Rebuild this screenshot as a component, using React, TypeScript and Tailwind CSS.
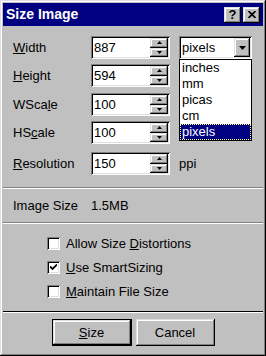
import React from "react";

const raised =
  "shadow-[inset_-1px_-1px_#000,inset_1px_1px_#dfdfdf,inset_-2px_-2px_#808080,inset_2px_2px_#fff]";

const sunken =
  "shadow-[inset_1px_1px_#808080,inset_-1px_-1px_#fff,inset_2px_2px_#000,inset_-2px_-2px_#dfdfdf]";

function SpinArrow({ down }: { down?: boolean }) {
  return (
    <svg width="5" height="3" viewBox="0 0 5 3">
      {down ? (
        <polygon points="0,0 5,0 2.5,3" fill="#000" />
      ) : (
        <polygon points="2.5,0 5,3 0,3" fill="#000" />
      )}
    </svg>
  );
}

function SpinField({ value }: { value: string }) {
  return (
    <div className={`flex h-[23px] w-[79px] bg-white p-[2px] ${sunken}`}>
      <div className="flex flex-1 items-center pl-[1px] text-[13px] leading-none">
        {value}
      </div>
      <div className="flex w-[18px] flex-col">
        <div className={`flex flex-1 items-center justify-center bg-[#c0c0c0] ${raised}`}>
          <SpinArrow />
        </div>
        <div className={`flex flex-1 items-center justify-center bg-[#c0c0c0] ${raised}`}>
          <SpinArrow down />
        </div>
      </div>
    </div>
  );
}

function Row({
  label,
  value,
  className,
  children,
}: {
  label: React.ReactNode;
  value: string;
  className: string;
  children?: React.ReactNode;
}) {
  return (
    <div className={`flex items-center ${className}`}>
      <div className="w-[78px] text-[13px]">{label}</div>
      <SpinField value={value} />
      {children}
    </div>
  );
}

function Checkbox({
  checked,
  children,
}: {
  checked?: boolean;
  children: React.ReactNode;
}) {
  return (
    <div className="flex h-[13px] items-center">
      <div
        className={`flex h-[13px] w-[13px] items-center justify-center bg-white ${sunken}`}
      >
        {checked && (
          <svg width="7" height="7" viewBox="0 0 7 7">
            <path
              d="M0 2.5 L2.5 5 L7 0.5"
              stroke="#000"
              strokeWidth="1.8"
              fill="none"
            />
          </svg>
        )}
      </div>
      <span className="ml-[6px] text-[13px]">{children}</span>
    </div>
  );
}

function Separator({ dark, className }: { dark?: boolean; className: string }) {
  return (
    <div className={className}>
      <div className={dark ? "h-px bg-[#000]" : "h-px bg-[#808080]"} />
      <div className="h-px bg-white" />
    </div>
  );
}

export default function App() {
  return (
    <div
      className={`flex h-[356px] w-[266px] flex-col bg-[#c0c0c0] p-[3px] font-['Liberation_Sans',Arial,sans-serif] text-black ${raised}`}
    >
      {/* title bar */}
      <div className="flex h-[23px] items-center justify-between bg-[#000080] pl-[3px] pr-[3px]">
        <span className="text-[14px] font-bold text-white">Size Image</span>

        <div className="flex gap-[2px]">
          <div
            className={`flex h-[16px] w-[17px] items-center justify-center bg-[#c0c0c0] text-[13px] font-bold leading-none ${raised}`}
          >
            ?
          </div>
          <div
            className={`flex h-[16px] w-[17px] items-center justify-center bg-[#c0c0c0] ${raised}`}
          >
            <svg width="8" height="7" viewBox="0 0 8 7">
              <path d="M0.5 0 L7.5 7 M7.5 0 L0.5 7" stroke="#000" strokeWidth="1.7" />
            </svg>
          </div>
        </div>
      </div>

      <div className="flex flex-col pl-[10px]">
        <Row
          className="mt-[10px]"
          value="887"
          label={
            <>
              <u>W</u>idth
            </>
          }
        >
          <div className="relative ml-[9px]">
            <div className={`flex h-[23px] w-[73px] bg-white p-[2px] ${sunken}`}>
              <div className="flex flex-1 items-center pl-px text-[13px]">pixels</div>
              <div
                className={`flex w-[16px] items-center justify-center bg-[#c0c0c0] ${raised}`}
              >
                <svg width="7" height="4" viewBox="0 0 7 4">
                  <polygon points="0,0 7,0 3.5,4" fill="#000" />
                </svg>
              </div>
            </div>

            <div className="absolute left-0 top-full z-10 flex w-[73px] flex-col border border-black bg-white text-[13px]">
              <div className="h-[16px] pl-[2px] leading-[16px]">inches</div>
              <div className="h-[16px] pl-[2px] leading-[16px]">mm</div>
              <div className="h-[16px] pl-[2px] leading-[16px]">picas</div>
              <div className="h-[16px] pl-[2px] leading-[16px]">cm</div>
              <div className="h-[16px] bg-[#000080] pl-[2px] leading-[16px] text-white outline-1 -outline-offset-1 outline-dotted outline-[#ffff80]">
                pixels
              </div>
            </div>
          </div>
        </Row>

        <Row
          className="mt-[5px]"
          value="594"
          label={
            <>
              <u>H</u>eight
            </>
          }
        />

        <Row
          className="mt-[6px]"
          value="100"
          label={
            <>
              WSca<u>l</u>e
            </>
          }
        />

        <Row
          className="mt-[5px]"
          value="100"
          label={
            <>
              HS<u>c</u>ale
            </>
          }
        />

        <Row
          className="mt-[8px]"
          value="150"
          label={
            <>
              <u>R</u>esolution
            </>
          }
        >
          <span className="ml-[9px] text-[13px]">ppi</span>
        </Row>
      </div>

      <Separator className="mt-[12px]" />

      <div className="flex h-[33px] items-center pl-[10px] text-[13px]">
        <span className="w-[78px]">Image Size</span>
        <span>1.5MB</span>
      </div>

      <Separator className="" />

      <div className="mt-[13px] flex flex-col gap-[11px] pl-[44px]">
        <Checkbox>
          Allow Size <u>D</u>istortions
        </Checkbox>
        <Checkbox checked>
          <u>U</u>se SmartSizing
        </Checkbox>
        <Checkbox>
          <u>M</u>aintain File Size
        </Checkbox>
      </div>

      <Separator dark className="mt-[13px]" />

      <div className="mt-[6px] flex justify-center gap-[4px]">
        <div className="h-[27px] w-[80px] border border-black">
          <div
            className={`flex h-full w-full items-center justify-center bg-[#c0c0c0] text-[13px] ${raised}`}
          >
            <span>
              <u>S</u>ize
            </span>
          </div>
        </div>
        <div
          className={`flex h-[27px] w-[79px] items-center justify-center bg-[#c0c0c0] text-[13px] ${raised}`}
        >
          Cancel
        </div>
      </div>
    </div>
  );
}
